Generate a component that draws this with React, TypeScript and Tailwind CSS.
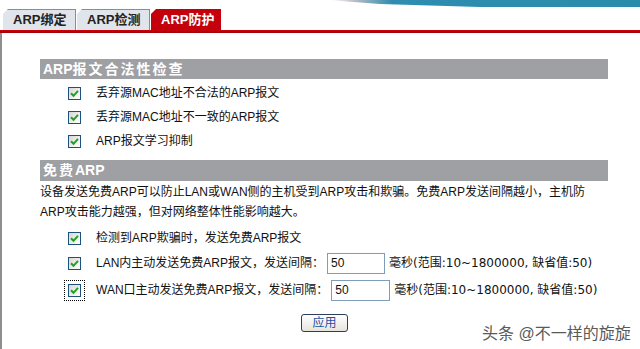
import React from 'react';

const font = "font-['Liberation_Sans','Noto_Sans_CJK_SC',sans-serif]";

function Check({ focus }: { focus?: boolean }) {
  return (
    <span
      className={
        'flex p-[3px] border ' + (focus ? 'border-dotted border-black' : 'border-transparent')
      }
    >
      <span className="flex h-[13px] w-[13px] items-center justify-center border border-[#1c5180] bg-gradient-to-br from-[#d8d8d2] to-white">
        <svg width="9" height="9" viewBox="0 0 9 9">
          <path d="M1 4.2 L3.5 6.8 L8 1.8" stroke="#21a121" strokeWidth="2" fill="none" />
        </svg>
      </span>
    </span>
  );
}

function Tab({ label, active }: { label: string; active?: boolean }) {
  return (
    <div
      className={
        'flex h-[21px] items-center pl-[10px] text-[13px] font-bold [clip-path:polygon(5px_0,100%_0,100%_100%,0_100%,0_5px)] ' +
        (active
          ? 'w-[70px] bg-[#c4000c] text-white'
          : 'w-[73px] border-t border-r border-[#8c8c8c] bg-[#e0e4eb] text-[#222]')
      }
    >
      {label}
    </div>
  );
}

function Row({ text, focus, children }: { text: string; focus?: boolean; children?: React.ReactNode }) {
  return (
    <div className="flex h-[24px] items-center pl-[24px]">
      <Check focus={focus} />
      <span className="ml-[11px]">{text}</span>
      {children}
    </div>
  );
}

function Field({ value, w, ml }: { value: string; w: string; ml: string }) {
  return (
    <span
      className={`flex h-[21px] items-center border border-[#7f9db9] bg-white pl-[3px] ${w} ${ml}`}
    >
      {value}
    </span>
  );
}

export default function App() {
  return (
    <div className={`relative h-[349px] w-[640px] overflow-hidden bg-white text-[12px] text-[#111] ${font}`}>
      {/* top strip */}
      <div className="flex h-[9px] justify-end">
        <svg width="320" height="9" viewBox="0 0 320 9">
          <defs>
            <linearGradient id="band" x1="0" x2="1" y1="0" y2="0">
              <stop offset="0" stopColor="#ffffff" />
              <stop offset="0.08" stopColor="#b8bcc4" />
              <stop offset="0.2" stopColor="#2e8db0" />
              <stop offset="1" stopColor="#2a8cab" />
            </linearGradient>
          </defs>
          <path d="M10 0 L320 0 L320 7 L160 7 L60 4 L20 1 Z" fill="url(#band)" />
        </svg>
      </div>

      {/* tabs */}
      <div className="flex h-[21px] items-end gap-[1px] pl-[3px]">
        <Tab label="ARP绑定" />
        <Tab label="ARP检测" />
        <Tab label="ARP防护" active />
      </div>
      <div className="h-[3px] bg-gradient-to-b from-[#d0000a] to-[#9a0008]" />

      <div className="h-[316px] border-l-[2px] border-[#8e8e8e] pl-[38px] pt-[26px]">
        <div className="w-[568px]">
          <div className="flex h-[20px] items-center bg-[#9ea0a3] pl-[3px] text-[14px] font-bold text-white">
            ARP<span className="tracking-[2px]">报文合法性检查</span>
          </div>
          <div className="pt-[2px]">
            <Row text="丢弃源MAC地址不合法的ARP报文" />
            <Row text="丢弃源MAC地址不一致的ARP报文" />
            <Row text="ARP报文学习抑制" />
          </div>

          <div className="mt-[7px] flex h-[21px] items-center bg-[#9ea0a3] pl-[3px] text-[14px] font-bold text-white">
            <span className="tracking-[2px]">免费</span>ARP
          </div>
          <p className="pt-[1px] leading-[20px]">
            设备发送免费ARP可以防止LAN或WAN侧的主机受到ARP攻击和欺骗。免费ARP发送间隔越小，主机防
            <br />
            ARP攻击能力越强，但对网络整体性能影响越大。
          </p>

          <div className="pt-[4px]">
            <Row text="检测到ARP欺骗时，发送免费ARP报文" />
            <div className="h-[1px]" />
            <Row text="LAN内主动发送免费ARP报文，发送间隔：">
              <Field value="50" w="w-[58px]" ml="ml-[3px]" />
              <span className="ml-[4px] font-['DejaVu_Sans','Noto_Sans_CJK_SC',sans-serif] text-[12px]">
                毫秒(范围:10~1800000, 缺省值:50)
              </span>
            </Row>
            <div className="h-[3px]" />
            <Row text="WAN口主动发送免费ARP报文，发送间隔：" focus>
              <Field value="50" w="w-[59px]" ml="ml-[3px]" />
              <span className="ml-[4px] font-['DejaVu_Sans','Noto_Sans_CJK_SC',sans-serif] text-[12px]">
                毫秒(范围:10~1800000, 缺省值:50)
              </span>
            </Row>
          </div>

          <div className="mt-[12px] flex pl-[261px]">
            <button className="flex h-[18px] w-[47px] items-center justify-center rounded-[3px] border border-[#2d3e5c] bg-gradient-to-b from-white to-[#e6e4dc] text-[12px] text-[#1b52a8]">
              应用
            </button>
          </div>
        </div>
      </div>

      <div className="absolute left-[482px] top-[322px] text-[16px] text-[#5a5a5a] [text-shadow:0_0_2px_#fff]">
        头条 @不一样的旋旋
      </div>
    </div>
  );
}
